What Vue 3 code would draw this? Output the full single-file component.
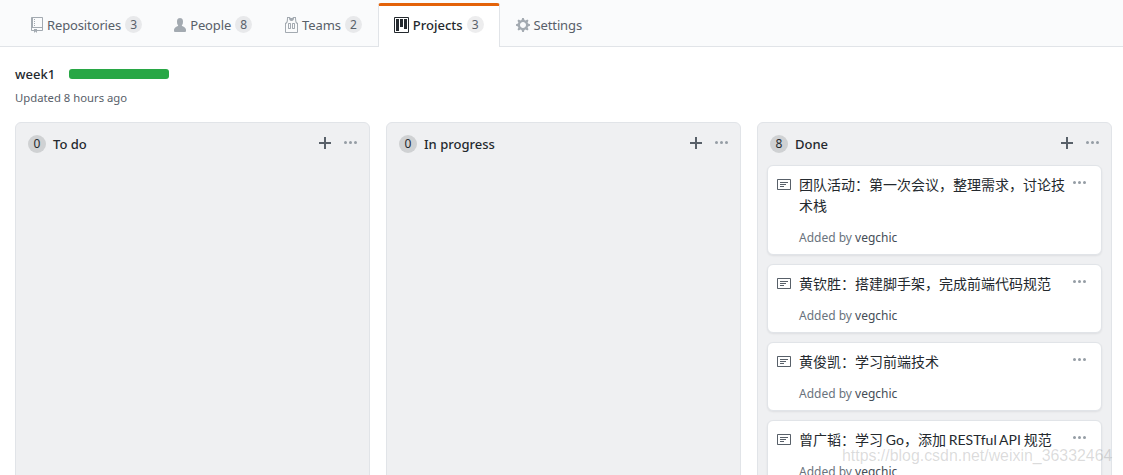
<script setup>
const icons = {
  repo: { box: '0 0 12 16', d: 'M4 9H3V8h1v1zm0-3H3v1h1V6zm0-2H3v1h1V4zm0-2H3v1h1V2zm8-1v12c0 .55-.45 1-1 1H6v2l-1.5-1.5L3 16v-2H1c-.55 0-1-.45-1-1V1c0-.55.45-1 1-1h10c.55 0 1 .45 1 1zm-1 10H1v2h2v-1h3v1h5v-2zm0-10H2v9h9V1z' },
  person: { box: '0 0 12 16', d: 'M12 14.002a.998.998 0 0 1-.998.998H1.001A1 1 0 0 1 0 13.999V13c0-2.633 4-4 4-4s.229-.409 0-1c-.841-.62-.944-1.59-1-4 .173-2.413 1.867-3 3-3s2.827.586 3 3c-.056 2.41-.159 3.38-1 4-.229.59 0 1 0 1s4 1.367 4 4v1.002z' },
  jersey: { box: '0 0 14 16', d: 'M4.5 6l-.5.5v5l.5.5h2l.5-.5v-5L6.5 6h-2zM6 11H5V7h1v4zm6.27-7.25C12.05 2.37 11.96 1.12 12 0H9.02c0 .27-.13.48-.39.69-.25.2-.63.3-1.13.3-.5 0-.88-.09-1.13-.3-.23-.2-.36-.42-.36-.69H3c.05 1.13-.03 2.38-.25 3.75C2.55 5.13 1.95 5.88 1 6v9c.02.27.11.48.31.69.2.21.42.3.69.31h11c.27-.02.48-.11.69-.31.21-.2.3-.42.31-.69V6c-.95-.13-1.53-.88-1.75-2.25h.02zM13 15H2V7c.89-.5 1.48-1.25 1.72-2.25S4.03 2.5 4 1h1c-.02.78.16 1.47.52 2.06.36.58 1.02.89 2 .94.98-.02 1.64-.33 2-.94.36-.59.5-1.28.48-2.06h1c.02 1.42.13 2.55.33 3.38.2.81.69 2 1.67 2.63v8V15zM8.5 6l-.5.5v5l.5.5h2l.5-.5v-5l-.5-.5h-2zm1.5 5H9V7h1v4z' },
  project: { box: '0 0 15 16', d: 'M10 12h3V2h-3v10zm-4-2h3V2H6v8zm-4 4h3V2H2v12zm-1 1h13V1H1v14zM14 0H1a1 1 0 0 0-1 1v14a1 1 0 0 0 1 1h13a1 1 0 0 0 1-1V1a1 1 0 0 0-1-1z' },
  gear: { box: '0 0 14 16', d: 'M14 8.77v-1.6l-1.94-.64-.45-1.09.88-1.84-1.13-1.13-1.81.91-1.09-.45-.69-1.92h-1.6l-.63 1.94-1.11.45-1.84-.88-1.13 1.13.91 1.81-.45 1.09L0 7.23v1.59l1.94.64.45 1.09-.88 1.84 1.13 1.13 1.81-.91 1.09.45.69 1.92h1.59l.63-1.94 1.11-.45 1.84.88 1.13-1.13-.92-1.81.47-1.09L14 8.75v.02zM7 11c-1.66 0-3-1.34-3-3s1.34-3 3-3 3 1.34 3 3-1.34 3-3 3z' },
  note: { box: '0 0 14 16', d: 'M3 10h4V9H3v1zm0-2h6V7H3v1zm0-2h8V5H3v1zm10 6H1V3h12v9zM1 2c-.55 0-1 .45-1 1v9c0 .55.45 1 1 1h12c.55 0 1-.45 1-1V3c0-.55-.45-1-1-1H1z' },
  plus: { box: '0 0 12 16', d: 'M12 9H7v5H5V9H0V7h5V2h2v5h5v2z' },
  kebab: { box: '0 0 13 16', d: 'M1.5 9a1.5 1.5 0 1 0 0-3 1.5 1.5 0 0 0 0 3zm5 0a1.5 1.5 0 1 0 0-3 1.5 1.5 0 0 0 0 3zM13 7.5a1.5 1.5 0 1 1-3 0 1.5 1.5 0 0 1 3 0z' }
}

const tabs = [
  { label: 'Repositories', icon: 'repo', count: 3 },
  { label: 'People', icon: 'person', count: 8 },
  { label: 'Teams', icon: 'jersey', count: 2 },
  { label: 'Projects', icon: 'project', count: 3, selected: true },
  { label: 'Settings', icon: 'gear' }
]

const columns = [
  { name: 'To do', count: 0, cards: [] },
  { name: 'In progress', count: 0, cards: [] },
  {
    name: 'Done',
    count: 8,
    cards: [
      '团队活动：第一次会议，整理需求，讨论技术栈',
      '黄钦胜：搭建脚手架，完成前端代码规范',
      '黄俊凯：学习前端技术',
      '曾广韬：学习 Go，添加 RESTful API 规范'
    ]
  }
]
</script>

<template>
  <div class="page">
    <nav class="tabs">
      <a v-for="tab in tabs" :key="tab.label" class="tab" :class="{ selected: tab.selected }">
        <svg class="tab-icon" :viewBox="icons[tab.icon].box" :width="icons[tab.icon].box.split(' ')[2]" height="16">
          <path :d="icons[tab.icon].d" fill-rule="evenodd" />
        </svg>
        <span>{{ tab.label }}</span>
        <span v-if="tab.count" class="tab-count">{{ tab.count }}</span>
      </a>
    </nav>

    <header class="project-head">
      <div class="title-row">
        <span class="project-name">week1</span>
        <span class="progress"></span>
      </div>
      <p class="updated">Updated 8 hours ago</p>
    </header>

    <main class="board">
      <section v-for="col in columns" :key="col.name" class="column">
        <div class="column-head">
          <span class="col-count">{{ col.count }}</span>
          <h3>{{ col.name }}</h3>
          <svg class="col-plus" :viewBox="icons.plus.box" width="12" height="16"><path :d="icons.plus.d" /></svg>
          <svg class="col-kebab" :viewBox="icons.kebab.box" width="13" height="16"><path :d="icons.kebab.d" /></svg>
        </div>
        <article v-for="card in col.cards" :key="card" class="card">
          <svg class="note" :viewBox="icons.note.box" width="14" height="16"><path :d="icons.note.d" fill-rule="evenodd" /></svg>
          <div class="card-body">
            <p class="card-title">{{ card }}</p>
            <p class="card-meta">Added by <span>vegchic</span></p>
          </div>
          <svg class="card-kebab" :viewBox="icons.kebab.box" width="13" height="16"><path :d="icons.kebab.d" /></svg>
        </article>
      </section>
    </main>

    <div class="watermark">https://blog.csdn.net/weixin_36332464</div>
  </div>
</template>

<style>
html, body {
  margin: 0;
  background: #fff;
  overflow: hidden;
}
</style>

<style scoped>
.page {
  position: relative;
  width: 1123px;
  height: 475px;
  overflow: hidden;
  font-family: "Noto Sans", "Noto Sans CJK SC", sans-serif;
  font-size: 13px;
  color: #24292e;
}

.tabs {
  display: flex;
  height: 43px;
  padding: 3px 0 0 15px;
  background: #fafbfc;
  border-bottom: 1px solid #e1e4e8;
}

.tab {
  display: flex;
  align-items: center;
  height: 43px;
  box-sizing: border-box;
  padding: 0 16px;
  color: #586069;
  line-height: 20px;
  letter-spacing: -0.13px;
}

.tab.selected {
  height: 44px;
  margin-bottom: -1px;
  padding: 0 15px 4px;
  background: #fff;
  border: 1px solid #e1e4e8;
  border-top: 3px solid #e36209;
  border-bottom: 0;
  border-radius: 3px 3px 0 0;
  color: #24292e;
  font-weight: 500;
  letter-spacing: 0;
}

.tab-icon {
  margin-right: 4px;
  fill: #a3aab1;
}

.selected .tab-icon {
  fill: #24292e;
}

.tab-count {
  width: 17px;
  margin-left: 4px;
  background: rgba(27, 31, 35, 0.08);
  border-radius: 9px;
  font-size: 12px;
  font-weight: 400;
  line-height: 17px;
  text-align: center;
  color: #586069;
}

.project-head {
  padding: 16px 15px 0;
}

.title-row {
  display: flex;
  align-items: center;
  height: 21px;
}

.project-name {
  width: 54px;
  font-weight: 500;
}

.progress {
  width: 100px;
  height: 10px;
  background: #28a745;
  border-radius: 3px;
}

.updated {
  margin: 5px 0 0;
  font-size: 11.3px;
  line-height: 18px;
  color: #586069;
}

.board {
  display: flex;
  gap: 16px;
  margin: 15px 11px 0 15px;
}

.column {
  flex: 1;
  height: 400px;
  padding: 0 9px;
  box-sizing: border-box;
  background: #eff0f2;
  border: 1px solid #e1e4e8;
  border-radius: 6px;
}

.column-head {
  display: flex;
  align-items: center;
  height: 42px;
  padding: 0 3px;
}

.col-count {
  width: 18px;
  height: 18px;
  background: rgba(27, 31, 35, 0.15);
  border-radius: 50%;
  font-size: 12px;
  line-height: 18px;
  text-align: center;
}

.column-head h3 {
  flex: 1;
  margin: 0 0 0 7px;
  font-size: 13px;
  font-weight: 500;
}

.col-plus {
  margin-top: -2px;
  fill: #586069;
}

.col-kebab {
  margin: -2px 0 0 13px;
  fill: #959da5;
}

.card {
  display: flex;
  align-items: flex-start;
  margin-bottom: 9px;
  padding: 8px 15px 6px 9px;
  background: #fff;
  border: 1px solid #e1e4e8;
  border-radius: 6px;
  box-shadow: 0 1px 2px rgba(27, 31, 35, 0.08);
}

.note {
  flex: none;
  margin: 3px 8px 0 0;
  fill: #586069;
}

.card-body {
  flex: 1;
  min-width: 0;
}

.card-title {
  margin: 0;
  padding-right: 5px;
  font-family: Lato, "Noto Sans CJK SC", sans-serif;
  font-size: 14px;
  line-height: 21px;
  word-spacing: -0.75px;
}

.card-meta {
  margin: 12px 0 0;
  font-size: 12px;
  line-height: 20px;
  color: #6a737d;
}

.card-meta span {
  color: #444d56;
}

.card-kebab {
  flex: none;
  margin-top: 1px;
  fill: #959da5;
}

.watermark {
  position: absolute;
  left: 842px;
  top: 446px;
  font-family: "Liberation Sans", sans-serif;
  font-size: 15.9px;
  line-height: 20px;
  white-space: nowrap;
  color: rgba(130, 130, 130, 0.28);
}
</style>
